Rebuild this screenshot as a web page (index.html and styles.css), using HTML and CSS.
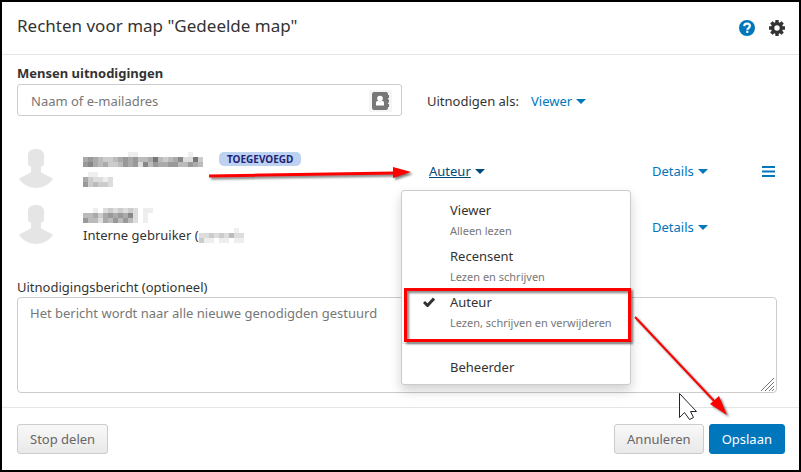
FILE: index.html
```
<!DOCTYPE html>
<html lang="nl">
    <head>
        <meta charset="utf-8">
        <title>Rechten voor map</title>
        <link rel="stylesheet" href="styles.css">
    </head>
    <body>
        <div class="dialog">
            <header>
                <h1>Rechten voor map "Gedeelde map"</h1>
                <button class="icon help" aria-label="Help">
                    <svg width="16" height="16" viewBox="0 0 16 16">
                        <circle cx="8" cy="8" r="8" fill="currentColor"/>
                        <path d="M5.200 6.100C5.400 4.500 6.500 3.700 8 3.700c1.700 0 2.900 1 2.900 2.400 0 1.900-2.600 2-2.600 3.700" fill="none" stroke="#fff" stroke-width="2.200"/>
                        <rect x="7.200" y="10.700" width="2.200" height="2.200" fill="#fff"/>
                    </svg>
                </button>
                <button class="icon" aria-label="Instellingen">
                    <svg width="16" height="16" viewBox="0 0 16 16">
                        <g fill="currentColor">
                            <rect x="6.300" y="0" width="3.400" height="16" rx="0.500"/>
                            <rect x="6.300" y="0" width="3.400" height="16" rx="0.500" transform="rotate(45 8 8)"/>
                            <rect x="6.300" y="0" width="3.400" height="16" rx="0.500" transform="rotate(90 8 8)"/>
                            <rect x="6.300" y="0" width="3.400" height="16" rx="0.500" transform="rotate(135 8 8)"/>
                            <circle cx="8" cy="8" r="6"/>
                        </g>
                        <circle cx="8" cy="8" r="2.700" fill="#fff"/>
                    </svg>
                </button>
            </header>

            <main>
                <label class="invite-label" for="invite">Mensen uitnodigingen</label>
                <div class="invite">
                    <div class="field">
                        <input id="invite" type="text" placeholder="Naam of e-mailadres">
                        <button class="address-book" aria-label="Adresboek">
                            <svg width="17" height="18" viewBox="0 0 17 18">
                                <path d="M2 0h12a2 2 0 0 1 2 2v1h1v3h-1v1.500h1v3h-1V12h1v3h-1v1a2 2 0 0 1-2 2H2a2 2 0 0 1-2-2V2a2 2 0 0 1 2-2z" fill="#777"/>
                                <circle cx="8" cy="6.500" r="2.800" fill="#fff"/>
                                <path d="M4 13.500V11c0-1.500 1-2.300 2.200-2.300 1 .8 2.600.8 3.600 0C11 8.700 12 9.500 12 11v2.500z" fill="#fff"/>
                            </svg>
                        </button>
                    </div>
                    <span>Uitnodigen als:</span>
                    <button class="link">Viewer<i class="caret"></i></button>
                </div>

                <div class="person">
                    <svg class="avatar" width="34" height="40" viewBox="0 0 34 40"><path d="M17 0c4 0 8 2 8 6v8c0 2-1 3-3 4v5c0 1 6 3 12 7-5 6-10 9-17 9S5 36 0 30c6-4 12-6 12-7v-5c-2-1-3-2-3-4V6c0-4 4-6 8-6z"/></svg>
                    <div class="who">
                        <div><svg class="masked" data-rows=".f.....ffeef.........e..|a9abccba9a9bba7bcba8dd7c|98abaccb9a9d8b9aa99bb9ab"></svg><span class="badge">TOEGEVOEGD</span></div>
                        <div><svg class="masked" data-rows=".ee...|acdded|9cbccd"></svg></div>
                    </div>
                    <div class="role">
                        <button class="link open">
                            <u>Auteur</u><i class="caret"></i>
                        </button>
                        <ul class="menu">
                            <li><button>Viewer<small>Alleen lezen</small></button></li>
                            <li><button>Recensent<small>Lezen en schrijven</small></button></li>
                            <li>
                                <button>
                                    <svg class="check" width="12" height="10" viewBox="0 0 12 10"><path d="M1 5l3.500 3.500L11 1.500" fill="none" stroke="#333" stroke-width="3"/></svg>
                                    Auteur<small>Lezen, schrijven en verwijderen</small>
                                </button>
                            </li>
                            <li class="divided"><button>Beheerder</button></li>
                        </ul>
                    </div>
                    <button class="link">Details<i class="caret"></i></button>
                    <button class="icon bars" aria-label="Acties">
                        <svg width="13" height="11" viewBox="0 0 13 11"><path d="M0 1h13M0 5.500h13M0 10h13" stroke="currentColor" stroke-width="2"/></svg>
                    </button>
                </div>

                <div class="person">
                    <svg class="avatar" width="34" height="40" viewBox="0 0 34 40"><path d="M17 0c4 0 8 2 8 6v8c0 2-1 3-3 4v5c0 1 6 3 12 7-5 6-10 9-17 9S5 36 0 30c6-4 12-6 12-7v-5c-2-1-3-2-3-4V6c0-4 4-6 8-6z"/></svg>
                    <div class="who">
                        <div><svg class="masked" data-rows="..e.dcdcdcd.ee.|bbaca9a9a8d.ef.|9bbdab9b9bd.e.f"></svg></div>
                        <div>Interne gebruiker (<svg class="masked" data-rows="..ff.f.ef|ddcdcdbdd|ceefeefee"></svg></div>
                    </div>
                    <div class="role"></div>
                    <button class="link">Details<i class="caret"></i></button>
                </div>

                <label class="message-label" for="message">Uitnodigingsbericht (optioneel)</label>
                <div class="message">
                    <textarea id="message" placeholder="Het bericht wordt naar alle nieuwe genodigden gestuurd"></textarea>
                    <svg class="grip" width="15" height="14" viewBox="0 0 15 14"><path d="M1 14L14 1M5 14l9-9M9 14l5-5M12 14l2-2" stroke="#777" fill="none"/></svg>
                </div>
            </main>

            <footer>
                <button class="btn stop">Stop delen</button>
                <button class="btn">Annuleren</button>
                <button class="btn primary">Opslaan</button>
            </footer>

            <!-- arrows, highlight and mouse pointer -->
            <svg class="notes" width="801" height="472" viewBox="0 0 801 472">
                <g class="red">
                    <path d="M209 176L395 173" stroke-width="3"/>
                    <path d="M393 167l18 5-18 6z" class="head"/>
                    <path d="M635 317L716 403" stroke-width="2"/>
                    <path d="M710 404l9-8 8 19z" class="head"/>
                    <rect x="405.500" y="289.500" width="224" height="51" stroke-width="3"/>
                </g>
                <path d="M679.500 393.500v24l5-5 5 7 4-2-3-6h6z" fill="#fff" stroke="#223"/>
            </svg>
        </div>

        <script>
            // every character is the grey shade of one 5px block, a dot is empty
            document.querySelectorAll('.masked').forEach(function(svg) {
                var rows = svg.dataset.rows.split('|');
                var out = '';
                for (var y = 0; y < rows.length; y++) {
                    for (var x = 0; x < rows[y].length; x++) {
                        var c = rows[y][x];
                        if (c != '.') {
                            out += '<rect x="' + x * 5 + '" y="' + y * 5 + '" width="5" height="5" fill="#' + c + c + c + '"/>';
                        }
                    }
                }
                svg.setAttribute('width', rows[0].length * 5);
                svg.setAttribute('height', rows.length * 5);
                svg.innerHTML = out;
            });
        </script>
    </body>
</html>
```
FILE: styles.css
```
* {
    box-sizing: border-box;
}

body {
    margin: 0;
    font: 13px/20px "Noto Sans", "Open Sans", sans-serif;
    color: #333;
    background-color: #fff;
}

button, input, textarea {
    font: inherit;
    color: inherit;
}

button {
    padding: 0;
    border: 0;
    background: none;
    cursor: pointer;
}

.dialog {
    position: relative;
    display: flex;
    flex-direction: column;
    min-height: 100vh;
    border: 2px solid #000;
}

header {
    display: flex;
    align-items: center;
    gap: 14px;
    height: 53px;
    padding: 0 14px 0 15px;
    border-bottom: 1px solid #e5e5e5;
}

h1 {
    flex: 1;
    margin: 0;
    padding-bottom: 5px;
    font-size: 17px;
    font-weight: 400;
}

.icon {
    display: flex;
    color: #333;
}

.help, .bars {
    color: #0076bd;
}

main {
    flex: 1;
    display: flex;
    flex-direction: column;
    padding: 8px 22px 14px 15px;
}

.invite-label {
    font-weight: 700;
}

.invite {
    display: grid;
    grid-template-columns: 1fr 79px 246px;
    column-gap: 25px;
    align-items: center;
    margin: 1px 0 25px;
    white-space: nowrap;
}

.invite span, .invite .link, .field input {
    padding: 2px 0 0;
}

.field {
    display: flex;
    align-items: center;
    height: 32px;
    padding: 0 9px 0 13px;
    border: 1px solid #ccc;
    border-radius: 3px;
}

.field input {
    flex: 1;
    border: 0;
    outline: 0;
}

::placeholder {
    color: #777;
    opacity: 1;
}

.address-book {
    display: flex;
    margin-top: 2px;
    padding: 2px 3px;
    background-color: #f5f5f5;
}

.link {
    display: flex;
    align-items: center;
    gap: 4px;
    color: #0076bd;
}

.open {
    color: #004a77;
}

.caret {
    border: 5px solid transparent;
    border-top-color: currentColor;
    border-bottom: 0;
}

.person {
    display: grid;
    grid-template-columns: 66px 1fr 223px 110px 15px;
    align-items: start;
    height: 56px;
    padding-top: 8px;
}

.person > .link, .person > .bars, .role {
    height: 20px;
    margin-top: 12px;
    align-items: center;
}

.avatar {
    margin-left: 2px;
    fill: #e5e5e5;
}

.who > div {
    display: flex;
    align-items: center;
    height: 20px;
}

.badge {
    margin-left: 16px;
    padding: 0 8px;
    border-radius: 5px;
    background-color: #bcd2f0;
    color: #1f1f7a;
    font-size: 10px;
    font-weight: 700;
    line-height: 14px;
}

.role {
    position: relative;
}

.menu {
    position: absolute;
    z-index: 1;
    top: 29px;
    left: -28px;
    width: 230px;
    margin: 0;
    padding: 7px 0 5px;
    list-style: none;
    background-color: #fff;
    border: 1px solid #ccc;
    border-radius: 3px;
    box-shadow: 0 6px 12px rgba(0, 0, 0, 0.18);
}

.menu button {
    position: relative;
    display: block;
    width: 100%;
    padding: 0 0 4px 48px;
    line-height: 24px;
    text-align: left;
}

.menu small {
    display: block;
    color: #777;
    font-size: 11px;
    line-height: 18px;
}

.menu .check {
    position: absolute;
    top: 7px;
    left: 21px;
}

.menu .divided {
    margin-top: 7px;
    padding-top: 11px;
    border-top: 1px solid #e5e5e5;
}

.menu .divided button {
    padding-bottom: 0;
}

.message-label {
    margin-top: 24px;
}

.message {
    position: relative;
    flex: 1;
    display: flex;
}

textarea {
    flex: 1;
    min-height: 94px;
    padding: 5px 12px;
    border: 1px solid #ccc;
    border-radius: 4px;
    outline: 0;
    resize: none;
}

.grip {
    position: absolute;
    right: 2px;
    bottom: 2px;
}

footer {
    display: flex;
    gap: 5px;
    padding: 16px 14px 16px 15px;
    border-top: 1px solid #e5e5e5;
}

.btn {
    height: 30px;
    padding: 0 12px;
    border: 1px solid #ccc;
    border-radius: 3px;
    background: linear-gradient(#f8f8f8, #e9e9e9);
    color: #666;
}

.stop {
    margin-right: auto;
}

.primary {
    border-color: #0076bd;
    background: #0076bd;
    color: #fff;
}

.notes {
    position: absolute;
    z-index: 2;
    top: -2px;
    left: -2px;
    pointer-events: none;
}

.red {
    fill: none;
    stroke: #f00;
    filter: drop-shadow(2px 2px 1px rgba(0, 0, 0, 0.5));
}

.head {
    fill: #f00;
    stroke: none;
}
```
